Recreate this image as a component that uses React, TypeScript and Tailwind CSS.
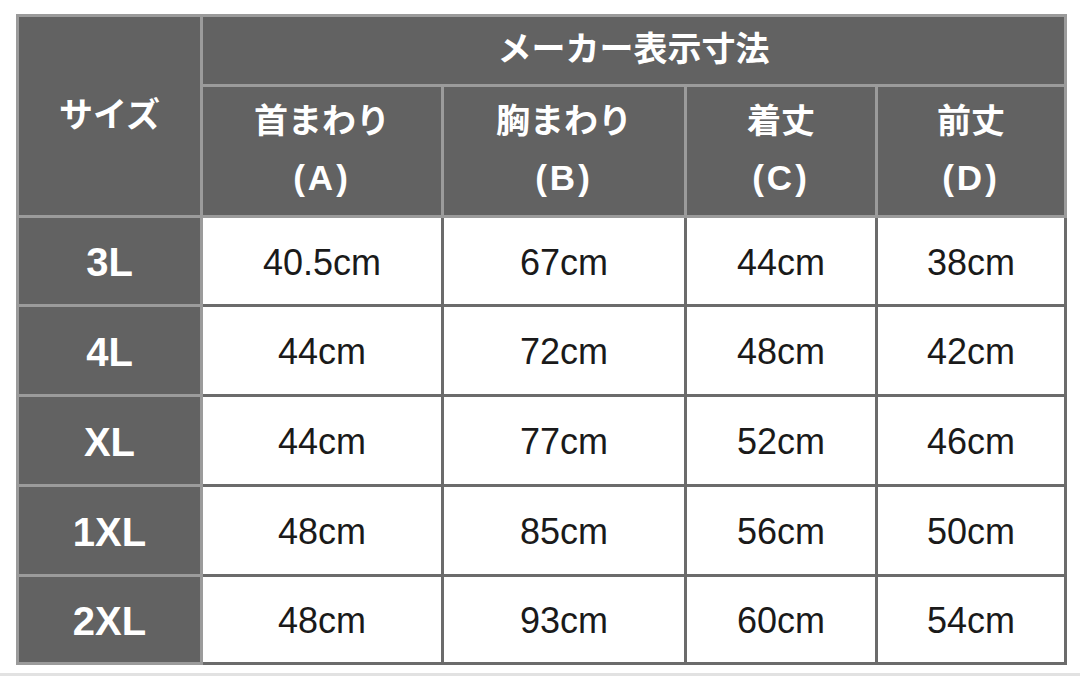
import React from 'react';

type Row = { size: string; values: string[] };

const columns = [
  { name: '首まわり', key: '(A)' },
  { name: '胸まわり', key: '(B)' },
  { name: '着丈', key: '(C)' },
  { name: '前丈', key: '(D)' },
];

const rows: Row[] = [
  { size: '3L', values: ['40.5cm', '67cm', '44cm', '38cm'] },
  { size: '4L', values: ['44cm', '72cm', '48cm', '42cm'] },
  { size: 'XL', values: ['44cm', '77cm', '52cm', '46cm'] },
  { size: '1XL', values: ['48cm', '85cm', '56cm', '50cm'] },
  { size: '2XL', values: ['48cm', '93cm', '60cm', '54cm'] },
];

const jp = "font-['Noto_Sans_CJK_JP','Noto_Sans',sans-serif]";

export default function App() {
  return (
    <div className="w-[1080px] h-[676px] bg-white flex flex-col overflow-hidden">
      <div className="pt-[14px] pl-[16px]">
        {/* Size table */}
        <div className="grid w-[1051px] grid-cols-[181px_238px_240px_188px_186px] grid-rows-[67px_128px_86px_87px_87px_87px_85px] gap-[3px] p-[3px] bg-[#6b6b6b]">
          <div
            className={`row-span-2 bg-[#626262] shadow-[0_0_0_3px_#9b9b9b] flex items-center justify-center pb-[8px] text-white text-[34px] font-bold ${jp}`}
          >
            サイズ
          </div>
          <div
            className={`col-span-4 bg-[#626262] shadow-[0_0_0_3px_#9b9b9b] flex items-center justify-center pb-[8px] text-white text-[34px] font-bold ${jp}`}
          >
            メーカー表示寸法
          </div>
          {columns.map((c) => (
            <div
              key={c.key}
              className={`bg-[#626262] shadow-[0_0_0_3px_#9b9b9b] flex flex-col items-center justify-center pb-[6px] text-white text-[34px] font-bold leading-[59px] ${jp}`}
            >
              <span>{c.name}</span>
              <span className="tracking-[3px] text-[35px] font-['Liberation_Sans',sans-serif]">{c.key}</span>
            </div>
          ))}
          {rows.map((r) => (
            <React.Fragment key={r.size}>
              <div className="bg-[#626262] shadow-[0_0_0_3px_#9b9b9b] flex items-center justify-center pt-[2px] text-white text-[40px] font-bold font-['Liberation_Sans',sans-serif]">
                {r.size}
              </div>
              {r.values.map((v, i) => (
                <div
                  key={i}
                  className="bg-white flex items-center justify-center pt-[3px] text-[#1a1a1a] text-[36px] font-['Liberation_Sans',sans-serif]"
                >
                  {v}
                </div>
              ))}
            </React.Fragment>
          ))}
        </div>
      </div>
      <div className="mt-[8px] h-[3px] bg-[#e2e2e2]" />
    </div>
  );
}
